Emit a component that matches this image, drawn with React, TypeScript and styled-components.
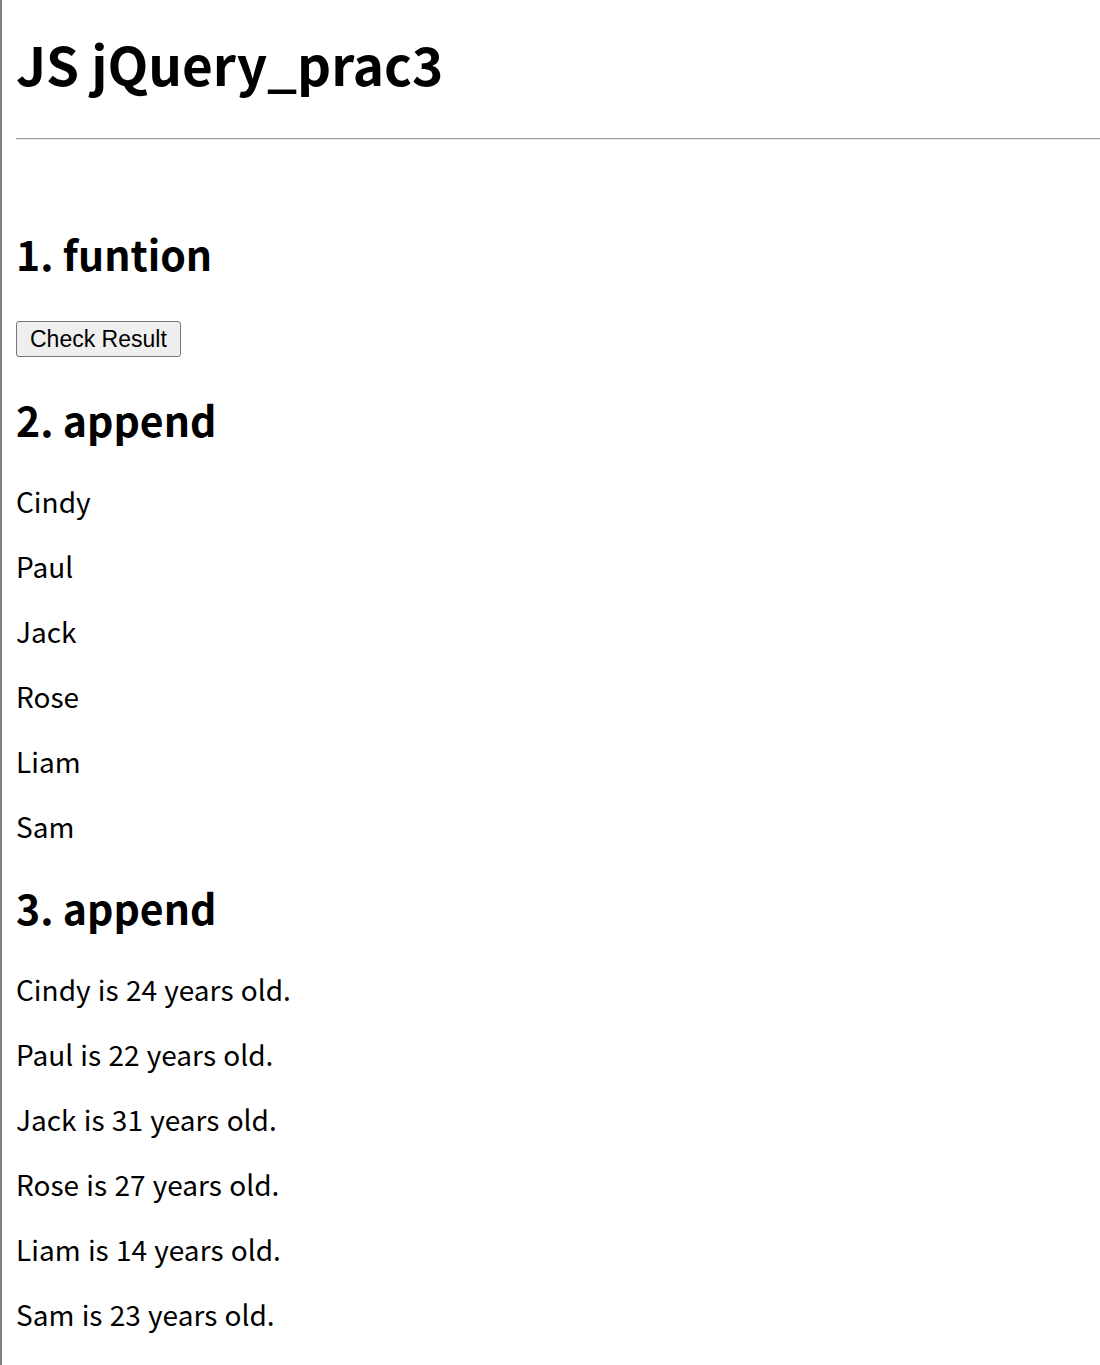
import React from 'react';
import styled, { createGlobalStyle } from 'styled-components';

const GlobalStyle = createGlobalStyle`
  html, body {
    margin: 0;
    padding: 0;
    background: #ffffff;
  }
  body {
    font-family: "Noto Sans CJK KR", "Noto Sans", sans-serif;
    color: #000000;
  }
`;

const Page = styled.div`
  display: flex;
  flex-direction: column;
  align-items: flex-start;
  min-height: 100vh;
  border-left: 2px solid #808080;
  padding-left: 14px;
  box-sizing: border-box;
`;

const Title = styled.h1`
  font-size: 53px;
  font-weight: 700;
  line-height: 70px;
  margin: 28px 0 0;
`;

const Rule = styled.hr`
  align-self: stretch;
  border: none;
  border-top: 1px solid #9a9a9a;
  border-bottom: 1px solid #eeeeee;
  height: 0;
  margin: 40px 0 51px;
`;

const SectionTitle = styled.h2`
  font-size: 41px;
  font-weight: 700;
  line-height: 56px;
  margin: 34px 0 8px;
`;

const Button = styled.button`
  font-family: "Liberation Sans", Arial, sans-serif;
  font-size: 23px;
  height: 36px;
  padding: 0 13px;
  margin-top: 32px;
  background: #efefef;
  color: #000000;
  border: 1px solid #767676;
  border-radius: 3px;
`;

const Line = styled.p`
  font-size: 28px;
  line-height: 37px;
  word-spacing: 1px;
  margin: 28px 0 0;
`;

const people = [
  { name: 'Cindy', age: 24 },
  { name: 'Paul', age: 22 },
  { name: 'Jack', age: 31 },
  { name: 'Rose', age: 27 },
  { name: 'Liam', age: 14 },
  { name: 'Sam', age: 23 },
];

export default function App(): React.ReactElement {
  return (
    <>
      <GlobalStyle />
      <Page>
        <Title>JS jQuery_prac3</Title>
        <Rule />
        <SectionTitle>1. funtion</SectionTitle>
        <Button type="button">Check Result</Button>
        <SectionTitle>2. append</SectionTitle>
        {people.map((p) => (
          <Line key={p.name}>{p.name}</Line>
        ))}
        <SectionTitle>3. append</SectionTitle>
        {people.map((p) => (
          <Line key={p.name}>
            {p.name} is {p.age} years old.
          </Line>
        ))}
      </Page>
    </>
  );
}
